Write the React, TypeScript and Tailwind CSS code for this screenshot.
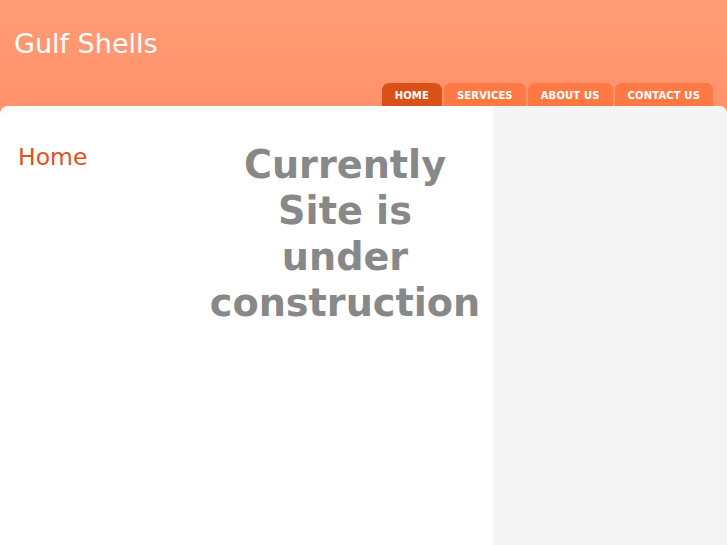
import React from 'react';

const navItems = ['Home', 'Services', 'About Us', 'Contact Us'];

export default function App() {
  return (
    <div className="min-h-[545px] bg-[#ff946c] font-['DejaVu_Sans',sans-serif] flex flex-col">
      {/* Header */}
      <header className="h-[106px] bg-gradient-to-b from-[#ff9c76] to-[#ff926a] flex flex-col justify-between">
        <h1 className="pl-[14px] pt-[27px] text-[27px] leading-[34px] text-white">Gulf Shells</h1>
        <nav className="flex justify-end gap-[2px] pr-[14px]">
          {navItems.map((item, i) => (
            <a
              key={item}
              href="#"
              className={
                'h-[23px] rounded-t-[7px] px-[13px] pt-[2px] flex items-center text-[10px] tracking-[0.15px] font-bold uppercase text-white ' +
                (i === 0 ? 'bg-[#d95019]' : 'bg-[#ff7945]')
              }
            >
              {item}
            </a>
          ))}
        </nav>
      </header>

      {/* Content */}
      <div className="flex-1 flex rounded-t-[8px] overflow-hidden bg-white">
        <aside className="w-[197px] pl-[18px] pt-[37px]">
          <h2 className="text-[23.5px] leading-[28px] text-[#dd5220]">Home</h2>
        </aside>
        <main className="w-[296px] pt-[36px]">
          <h2 className="text-center text-[38.2px] leading-[46px] font-bold text-[#888888]">
            Currently
            <br />
            Site is
            <br />
            under
            <br />
            construction
          </h2>
        </main>
        <div className="flex-1 bg-[#f5f5f5]" />
      </div>
    </div>
  );
}
